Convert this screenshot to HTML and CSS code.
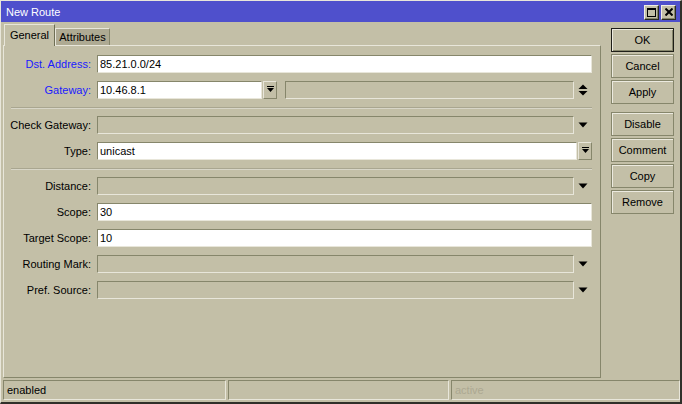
FILE: index.html
```html
<!DOCTYPE html>
<html>
<head>
<meta charset="utf-8">
<title>New Route</title>
<link rel="stylesheet" href="styles.css">
</head>
<body>
<div class="window">
  <div class="titlebar">
    <span class="title">New Route</span>
    <div class="tb-btns">
      <div class="tb-btn"><svg width="9" height="9" viewBox="0 0 9 9"><rect x="0.5" y="0.5" width="8" height="8" fill="none" stroke="#000" stroke-width="1"/><rect x="0" y="0" width="9" height="2" fill="#000"/></svg></div>
      <div class="tb-btn"><svg width="8" height="8" viewBox="0 0 8 8"><path d="M0.5 0.5 L7.5 7.5 M7.5 0.5 L0.5 7.5" stroke="#000" stroke-width="2"/></svg></div>
    </div>
  </div>
  <div class="main">
    <div class="leftcol">
      <div class="tabs">
        <div class="tab active">General</div>
        <div class="tab">Attributes</div>
      </div>
      <div class="panel">
        <div class="row">
          <div class="label blue">Dst. Address:</div>
          <div class="fields"><div class="input white grow">85.21.0.0/24</div></div>
        </div>
        <div class="row">
          <div class="label blue">Gateway:</div>
          <div class="fields">
            <div class="input white gw">10.46.8.1</div>
            <div class="ddbtn"><svg width="9" height="8" viewBox="0 0 9 8"><rect x="1" y="0" width="7" height="1" fill="#000"/><polygon points="1,2 8,2 4.5,6" fill="#000"/></svg></div>
            <div class="input gray grow gw2"></div>
            <div class="arrowbox"><svg width="10" height="12" viewBox="0 0 10 12"><polygon points="0.5,5 9.5,5 5,0.5" fill="#000"/><polygon points="0.5,7 9.5,7 5,11.5" fill="#000"/></svg></div>
          </div>
        </div>
        <div class="sep"></div>
        <div class="row">
          <div class="label">Check Gateway:</div>
          <div class="fields">
            <div class="input gray grow"></div>
            <div class="arrowbox"><svg width="10" height="6" viewBox="0 0 10 6"><polygon points="0.5,0.5 9.5,0.5 5,5.5" fill="#000"/></svg></div>
          </div>
        </div>
        <div class="row">
          <div class="label">Type:</div>
          <div class="fields">
            <div class="input white grow">unicast</div>
            <div class="ddbtn"><svg width="9" height="8" viewBox="0 0 9 8"><rect x="1" y="0" width="7" height="1" fill="#000"/><polygon points="1,2 8,2 4.5,6" fill="#000"/></svg></div>
          </div>
        </div>
        <div class="sep"></div>
        <div class="row">
          <div class="label">Distance:</div>
          <div class="fields">
            <div class="input gray grow"></div>
            <div class="arrowbox"><svg width="10" height="6" viewBox="0 0 10 6"><polygon points="0.5,0.5 9.5,0.5 5,5.5" fill="#000"/></svg></div>
          </div>
        </div>
        <div class="row">
          <div class="label">Scope:</div>
          <div class="fields"><div class="input white grow">30</div></div>
        </div>
        <div class="row">
          <div class="label">Target Scope:</div>
          <div class="fields"><div class="input white grow">10</div></div>
        </div>
        <div class="row">
          <div class="label">Routing Mark:</div>
          <div class="fields">
            <div class="input gray grow"></div>
            <div class="arrowbox"><svg width="10" height="6" viewBox="0 0 10 6"><polygon points="0.5,0.5 9.5,0.5 5,5.5" fill="#000"/></svg></div>
          </div>
        </div>
        <div class="row">
          <div class="label">Pref. Source:</div>
          <div class="fields">
            <div class="input gray grow"></div>
            <div class="arrowbox"><svg width="10" height="6" viewBox="0 0 10 6"><polygon points="0.5,0.5 9.5,0.5 5,5.5" fill="#000"/></svg></div>
          </div>
        </div>
      </div>
    </div>
    <div class="buttons">
      <div class="btn default">OK</div>
      <div class="btn">Cancel</div>
      <div class="btn">Apply</div>
      <div class="btn group">Disable</div>
      <div class="btn">Comment</div>
      <div class="btn">Copy</div>
      <div class="btn">Remove</div>
    </div>
  </div>
  <div class="status">
    <div class="cell">enabled</div>
    <div class="cell"></div>
    <div class="cell dim">active</div>
  </div>
</div>
</body>
</html>
```
FILE: styles.css
```css
html, body {
  margin: 0;
  padding: 0;
  background: #c3bfa7;
}

.window {
  width: 682px;
  height: 404px;
  box-sizing: border-box;
  border-style: solid;
  border-width: 1px 2px 2px 1px;
  border-color: #e8e6da #30302a #30302a #e8e6da;
  background: #c3bfa7;
  font-family: "Liberation Sans", Arial, sans-serif;
  font-size: 11px;
  color: #000;
  display: flex;
  flex-direction: column;
  overflow: hidden;
}

.titlebar {
  height: 21px;
  flex: none;
  background: #4f50cc;
  display: flex;
  align-items: center;
  justify-content: space-between;
  padding: 0 4px 0 5px;
  box-sizing: border-box;
}

.title {
  color: #fff;
  font-size: 11px;
}

.tb-btns {
  display: flex;
  gap: 2px;
  margin-top: 1px;
}

.tb-btn {
  width: 15px;
  height: 15px;
  box-sizing: border-box;
  background: #c3bfa7;
  border: 1px solid;
  border-color: #f0eee4 #2a2a22 #2a2a22 #f0eee4;
  box-shadow: inset -1px -1px 0 #86866b;
  display: flex;
  align-items: center;
  justify-content: center;
}

.main {
  height: 356px;
  flex: none;
  display: flex;
  padding-left: 2px;
  gap: 10px;
}

.leftcol {
  width: 598px;
  display: flex;
  flex-direction: column;
}

.tabs {
  display: flex;
  align-items: flex-end;
  height: 22px;
  margin-top: 2px;
  padding-left: 1px;
  position: relative;
  z-index: 2;
}

.tab {
  box-sizing: border-box;
  height: 17px;
  width: 55px;
  background: #aeaa93;
  border-style: solid;
  border-width: 1px 1px 0 1px;
  border-color: #e8e6da #86866b #86866b #e8e6da;
  text-align: center;
  line-height: 16px;
  margin-bottom: 1px;
}

.tab.active {
  height: 22px;
  width: 51px;
  background: #c3bfa7;
  line-height: 20px;
  margin-bottom: 0;
  border-right-color: #6e6e55;
}

.panel {
  margin-top: -1px;
  height: 333px;
  box-sizing: border-box;
  border: 1px solid;
  border-color: #e8e6da #86866b #86866b #e8e6da;
  padding: 9px 8px 0 0;
  display: flex;
  flex-direction: column;
  gap: 8px;
  position: relative;
  z-index: 1;
}

.row {
  display: flex;
  height: 18px;
  align-items: center;
}

.label {
  width: 93px;
  flex: none;
  box-sizing: border-box;
  padding-right: 6px;
  text-align: right;
  white-space: nowrap;
}

.label.blue {
  color: #1a1aff;
}

.fields {
  flex: 1;
  display: flex;
  height: 18px;
  align-items: stretch;
}

.input {
  box-sizing: border-box;
  height: 18px;
  border: 1px solid;
  border-color: #86866b #e8e6da #e8e6da #86866b;
  padding-left: 2px;
  line-height: 16px;
  white-space: nowrap;
}

.white {
  background: #fff;
}

.gray {
  background: #c3bfa7;
}

.grow {
  flex: 1;
}

.gw {
  width: 165px;
  flex: none;
}

.gw2 {
  margin-left: 8px;
}

.ddbtn {
  width: 14px;
  flex: none;
  margin-left: 1px;
  box-sizing: border-box;
  border: 1px solid;
  border-color: #e8e6da #86866b #86866b #e8e6da;
  display: flex;
  align-items: center;
  justify-content: center;
}

.arrowbox {
  width: 18px;
  flex: none;
  display: flex;
  align-items: center;
  justify-content: center;
}

.sep {
  margin: 0 0 -1px 7px;
  height: 0;
  border-top: 1px solid #a9a690;
  border-bottom: 1px solid #d8d6c8;
}

.buttons {
  width: 63px;
  display: flex;
  flex-direction: column;
  gap: 2px;
  padding-top: 6px;
}

.btn {
  height: 24px;
  box-sizing: border-box;
  border: 1px solid #86866b;
  box-shadow: inset 1px 1px 0 #eceadf;
  display: flex;
  align-items: center;
  justify-content: center;
  font-size: 11px;
}

.btn.default {
  border-color: #1e1e18;
  box-shadow: inset 1px 1px 0 #eceadf, inset -1px -1px 0 #86866b;
}

.btn.group {
  margin-top: 6px;
}

.status {
  height: 19px;
  flex: none;
  margin: 2px 0 3px 2px;
  display: grid;
  grid-template-columns: 223px 221px 1fr;
  gap: 2px;
}

.cell {
  box-sizing: border-box;
  border: 1px solid;
  border-color: #86866b #e8e6da #e8e6da #86866b;
  padding-left: 3px;
  line-height: 18px;
  white-space: nowrap;
}

.cell.dim {
  color: #aca892;
}
```
